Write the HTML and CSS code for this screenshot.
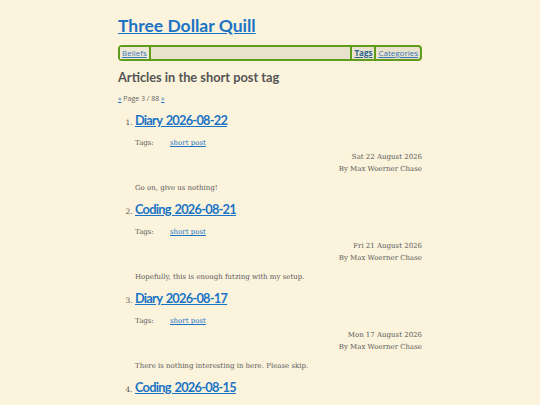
FILE: index.html
```html
<!DOCTYPE html>
<html>
<head>
<meta charset="utf-8">
<link rel="stylesheet" href="styles.css">
</head>
<body>
<div class="page">
  <h1 class="site-title"><a href="#">Three Dollar Quill</a></h1>
  <nav class="nav">
    <a class="nav-link nav-first" href="#">Beliefs</a>
    <span class="sep"></span>
    <span class="nav-fill"></span>
    <span class="sep"></span>
    <a class="nav-link nav-bold" href="#">Tags</a>
    <span class="sep"></span>
    <a class="nav-link" href="#">Categories</a>
  </nav>
  <h2 class="heading">Articles in the short post tag</h2>
  <p class="pager"><a href="#">«</a> Page 3 / 88 <a href="#">»</a></p>
  <ol class="articles">
    <li class="article">
      <h3 class="article-title"><a href="#">Diary 2026-08-22</a></h3>
      <div class="tags"><span class="tags-label">Tags:</span><a href="#">short post</a></div>
      <div class="meta"><div>Sat 22 August 2026</div><div>By Max Woerner Chase</div></div>
      <p class="summary">Go on, give us nothing!</p>
    </li>
    <li class="article">
      <h3 class="article-title"><a href="#">Coding 2026-08-21</a></h3>
      <div class="tags"><span class="tags-label">Tags:</span><a href="#">short post</a></div>
      <div class="meta"><div>Fri 21 August 2026</div><div>By Max Woerner Chase</div></div>
      <p class="summary">Hopefully, this is enough futzing with my setup.</p>
    </li>
    <li class="article">
      <h3 class="article-title"><a href="#">Diary 2026-08-17</a></h3>
      <div class="tags"><span class="tags-label">Tags:</span><a href="#">short post</a></div>
      <div class="meta"><div>Mon 17 August 2026</div><div>By Max Woerner Chase</div></div>
      <p class="summary">There is nothing interesting in here. Please skip.</p>
    </li>
    <li class="article">
      <h3 class="article-title"><a href="#">Coding 2026-08-15</a></h3>
    </li>
  </ol>
</div>
</body>
</html>
```

FILE: styles.css
```css
html, body {
  margin: 0;
  padding: 0;
  background: #fbf3dc;
}
body {
  font-family: "DejaVu Serif", serif;
  color: #5a5a5a;
}
.page {
  width: 304px;
  margin: 0 auto;
  padding-top: 14px;
}
a { color: #1b73c6; }
.site-title {
  margin: 0;
  font-family: "Lato", sans-serif;
  font-size: 17.5px;
  font-weight: 700;
  line-height: 24px;
}
.site-title a { color: #1b73c6; }
.nav {
  margin-top: 7px;
  height: 12px;
  border: 2px solid #5f9c1c;
  border-radius: 4px;
  background: #e9e2cc;
  display: flex;
  align-items: stretch;
  font-family: "Open Sans", sans-serif;
  font-size: 8px;
  line-height: 12px;
}
.nav-link {
  color: #3a78b5;
  padding: 0 2px;
}
.nav-first { background: #eee9d6; }
.nav-bold { font-weight: 700; color: #2b5f94; }
.sep {
  width: 2px;
  background: #5f9c1c;
}
.nav-fill { flex: 1; }
.heading {
  margin: 8px 0 0;
  font-family: "Lato", sans-serif;
  font-size: 12.8px;
  line-height: 16px;
  font-weight: 700;
  color: #555;
}
.pager {
  margin: 9px 0 0;
  font-family: "Open Sans", sans-serif;
  font-size: 7px;
  line-height: 10px;
  color: #666;
}
.articles {
  margin: 8px 0 0;
  padding-left: 17px;
  font-size: 7px;
}
.article { margin: 0; height: 89px; }
.article::marker { font-size: 7.5px; color: #555; }
.article-title {
  display: inline-block;
  margin: 0;
  font-family: "Lato", sans-serif;
  font-size: 12.8px;
  line-height: 16px;
  font-weight: 700;
  letter-spacing: -0.75px;
  word-spacing: 1.5px;
}
.tags {
  margin-top: 10px;
  line-height: 10px;
}
.tags-label {
  display: inline-block;
  width: 35px;
}
.meta {
  margin-top: 3px;
  text-align: right;
  line-height: 12px;
}
.summary {
  margin: 8px 0 0;
  line-height: 10px;
}
```
